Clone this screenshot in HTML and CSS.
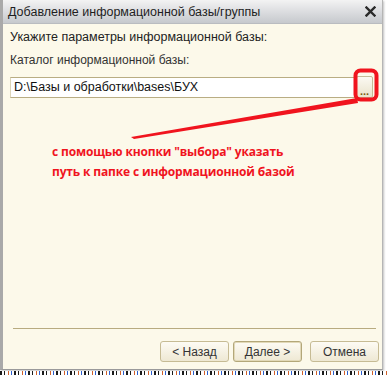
FILE: index.html
```html
<!DOCTYPE html>
<html lang="ru">
<head>
<meta charset="utf-8">
<link rel="stylesheet" href="styles.css">
</head>
<body>
<div class="screen">
  <div class="window">
    <div class="titlebar">
      <span class="title">Добавление информационной базы/группы</span>
      <svg class="close" width="11" height="11" viewBox="0 0 11 11"><path d="M1.5 1.5 L9.5 9.5 M9.5 1.5 L1.5 9.5" stroke="#2a2a2a" stroke-width="2.4" stroke-linecap="square"/></svg>
    </div>
    <div class="body">
      <div class="heading">Укажите параметры информационной базы:</div>
      <div class="label">Каталог информационной базы:</div>
      <div class="field-row">
        <div class="input">D:\Базы и обработки\bases\БУХ</div>
        <div class="pick"><span class="dots">...</span></div>
      </div>
      <div class="note">
        <div>с помощью кнопки "выбора" указать</div>
        <div>путь к папке с информационной базой</div>
      </div>
      <div class="spacer"></div>
      <div class="sep"></div>
      <div class="buttons">
        <div class="btn">&lt; Назад</div>
        <div class="btn default">Далее &gt;</div>
        <div class="btn cancel">Отмена</div>
      </div>
    </div>
  </div>
  <div class="strip"></div>
  <svg class="annot" width="387" height="375" viewBox="0 0 387 375">
    <rect x="355.5" y="70.5" width="21" height="29" rx="5" ry="5" fill="none" stroke="#f0141e" stroke-width="4"/>
    <polygon points="357,98 358,103 134,139 131,137" fill="#f0141e"/>
  </svg>
</div>
</body>
</html>
```
FILE: styles.css
```css
* { box-sizing: border-box; }
html, body { margin: 0; padding: 0; background: #ffffff; }
.screen {
  position: relative;
  width: 387px;
  height: 375px;
  overflow: hidden;
  font-family: "Liberation Sans", Arial, sans-serif;
}
.window {
  width: 383px;
  height: 370px;
  border-left: 3px solid #a9a9a9;
  border-right: 1px solid #b5b5b5;
  border-bottom: 1px solid #9a9a9a;
  display: flex;
  flex-direction: column;
  background: #fcf9ea;
  box-shadow: 1px 1px 2px rgba(0,0,0,0.25);
}
.titlebar {
  height: 24px;
  flex: none;
  display: flex;
  align-items: center;
  justify-content: space-between;
  padding: 0 6px 0 5px;
  background: linear-gradient(#f3f3f3, #dcdde0 50%, #c6c9cd);
  border-bottom: 1px solid #b9bcc0;
}
.title { font-size: 12.5px; color: #1e1e1e; }
.close { display: block; }
.body {
  flex: 1;
  display: flex;
  flex-direction: column;
  padding: 6px 3px 7px 7px;
}
.heading { font-size: 12.5px; color: #222; line-height: 15px; }
.label { font-size: 12px; color: #333; line-height: 14px; margin-top: 8px; }
.field-row { display: flex; align-items: center; margin-top: 9px; height: 22px; }
.input {
  flex: 1;
  height: 21px;
  background: #fff;
  border-top: 1px solid #b9ad83;
  border-bottom: 1px solid #b9ad83;
  border-left: 1px solid #ddd5b8;
  font-size: 12.5px;
  color: #111;
  line-height: 19px;
  padding-left: 3px;
}
.pick {
  width: 17px;
  height: 22px;
  margin: 0 6px 0 1px;
  border: 1px solid #c5bb98;
  border-radius: 2px;
  background: linear-gradient(#fbf9f2, #e9e3cc);
  display: flex;
  align-items: flex-end;
  justify-content: center;
}
.dots { font-size: 11px; font-weight: bold; color: #7a5a10; line-height: 12px; letter-spacing: 0; }
.note {
  margin: 44px 0 0 42px;
  font-family: "Open Sans", "Liberation Sans", sans-serif;
  font-weight: bold;
  font-size: 12px;
  letter-spacing: -0.15px;
  line-height: 20px;
  color: #f0141e;
  white-space: nowrap;
}
.spacer { flex: 1; }
.sep { height: 1px; background: #b8ab80; margin: 0 3px 0 3px; }
.buttons { display: flex; justify-content: flex-end; gap: 4px; margin-top: 12px; padding-right: 0; }
.btn {
  width: 69px;
  height: 21px;
  border: 1px solid #c6bb94;
  border-radius: 3px;
  background: linear-gradient(#fdfbf4, #eee8d3);
  font-size: 12px;
  color: #333;
  display: flex;
  align-items: center;
  justify-content: center;
}
.btn.default { border: 1px solid #b3a779; box-shadow: inset 0 0 0 1px #e2d9b8; }
.btn.cancel { margin-left: 4px; }
.strip {
  height: 4px;
  margin-top: 1px;
  background: repeating-linear-gradient(90deg, #1a1a1a 0 2px, #ffffff 2px 4px, #1a1a1a 4px 5px, #ffffff 5px 8px, #d0602a 8px 9px, #ffffff 9px 11px, #2a5fd0 11px 12px, #ffffff 12px 14px);
}
.annot { position: absolute; left: 0; top: 0; pointer-events: none; }
```
